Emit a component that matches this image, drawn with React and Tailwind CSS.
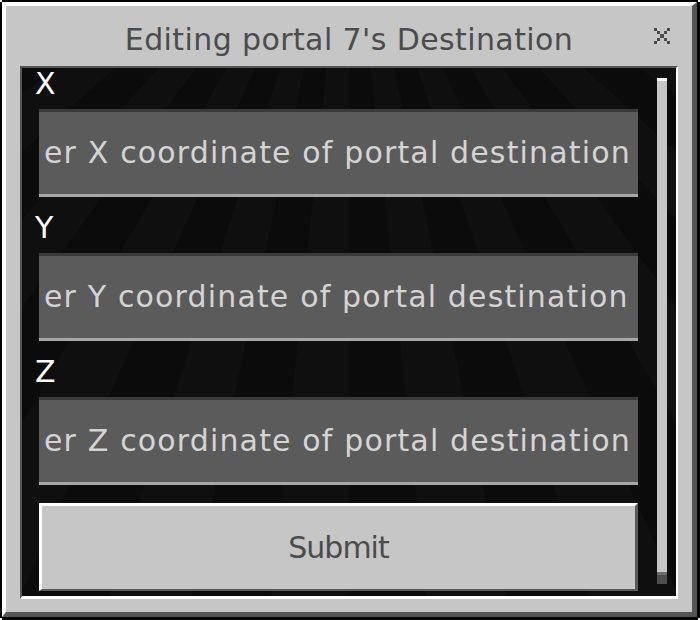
import React from "react";

function Field({ label, text, first }) {
  return (
    <div>
      <div
        className={
          first
            ? "h-[41px] pt-[1px] -ml-[4px] text-[30px] leading-[30px] text-white"
            : "h-[56px] pt-[16px] -ml-[4px] text-[30px] leading-[30px] text-white"
        }
      >
        {label}
      </div>
      <div className="h-[88px] bg-[#5b5b5b] border-t-[3px] border-b-[3px] border-t-[#3a3a3a] border-b-[#a8a8a8] flex items-center">
        <div className="ml-[5px] whitespace-nowrap text-[30px] leading-[30px] tracking-[1.15px] text-[#d4d4d4]">
          {text}
        </div>
      </div>
    </div>
  );
}

function CloseIcon() {
  const cells = [
    [0, 0], [4, 0], [1, 1], [3, 1], [2, 2], [1, 3], [3, 3], [0, 4], [4, 4],
  ];
  return (
    <svg width="16" height="16" viewBox="0 0 5 5" shapeRendering="crispEdges">
      {cells.map(([x, y]) => (
        <rect key={`${x}-${y}`} x={x} y={y} width="1" height="1" fill="#4c4c4c" />
      ))}
    </svg>
  );
}

export default function App() {
  return (
    <div className="w-[700px] h-[620px] bg-white [font-family:'DejaVu_Sans',sans-serif]">
      <div className="w-full h-full bg-black pt-[2px] pl-[2px] pr-[3px] pb-[3px] [clip-path:polygon(2px_0,calc(100%_-_2px)_0,calc(100%_-_2px)_2px,100%_2px,100%_calc(100%_-_2px),calc(100%_-_2px)_calc(100%_-_2px),calc(100%_-_2px)_100%,2px_100%,2px_calc(100%_-_2px),0_calc(100%_-_2px),0_2px,2px_2px)]">
        <div className="w-full h-full flex flex-col bg-[#c6c6c6] border-t-4 border-l-4 border-r-[5px] border-b-[5px] border-t-white border-l-white border-r-[#555555] border-b-[#555555]">
          {/* title bar */}
          <div className="h-[60px] shrink-0 grid grid-cols-[1fr_auto_1fr]">
            <div />
            <div className="pt-[19px] text-[30px] leading-[30px] tracking-[0.4px] text-[#4c4c4c] whitespace-nowrap">
              Editing portal 7's Destination
            </div>
            <div className="flex justify-end pt-[22px] pr-[22px]">
              <CloseIcon />
            </div>
          </div>
          {/* panel */}
          <div className="flex-1 mx-[14px] mb-[13px] border-t-2 border-l-2 border-r-2 border-b-[3px] border-t-[#555555] border-l-[#555555] border-r-white border-b-white bg-[#0c0c0c] bg-[repeating-conic-gradient(from_150deg_at_50%_-40%,#0b0b0b_0deg_6deg,#0f0f0f_6deg_12deg)] flex overflow-hidden">
            <div className="flex-1 pl-[17px]">
              <Field first label="X" text="er X coordinate of portal destination" />
              <Field label="Y" text="er Y coordinate of portal destination" />
              <Field label="Z" text="er Z coordinate of portal destination" />
              <div className="mt-[18px] h-[88px] bg-[#c6c6c6] border-t-[3px] border-l-[3px] border-r-[3px] border-b-[2px] border-t-white border-l-white border-r-[#5a5a5a] border-b-[#5a5a5a] flex items-center justify-center text-[30px] leading-[30px] tracking-[-1px] text-[#4c4c4c]">
                Submit
              </div>
            </div>
            <div className="w-[10px] ml-[19px] mr-[9px] mt-[10px] flex flex-col">
              <div className="h-[497px] bg-[#c6c6c6] border-t-[3px] border-b-[3px] border-t-white border-b-[#6a6a6a]" />
              <div className="h-[9px] bg-[#4d4d4d]" />
            </div>
          </div>
        </div>
      </div>
    </div>
  );
}
